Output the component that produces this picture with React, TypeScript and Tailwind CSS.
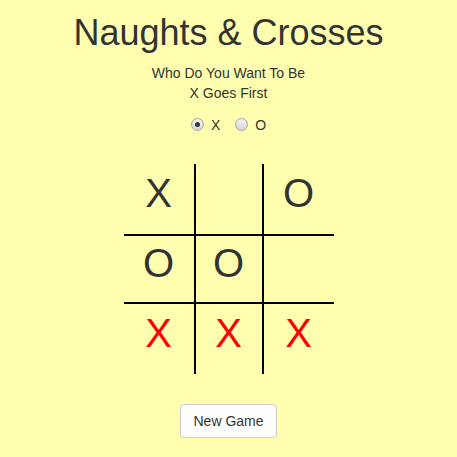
import { useState } from "react";

type Mark = "X" | "O" | "";

const initialBoard: Mark[] = ["X", "", "O", "O", "O", "", "X", "X", "X"];
const winLine = [6, 7, 8];

// borders per cell so the grid only has the inner lines
const cellBorders = [
	"",
	"border-x-2",
	"",
	"border-y-2",
	"border-2",
	"border-y-2",
	"",
	"border-x-2",
	"",
];

const Radio = ({ checked }: { checked: boolean }) => (
	<span className="relative flex h-[13px] w-[13px] items-center justify-center rounded-full border border-[#a3a3a3] bg-gradient-to-b from-[#f4f4f4] to-[#d6d6d6]">
		{checked && <span className="h-[5px] w-[5px] rounded-full bg-[#3a3a3a]" />}
	</span>
);

const App = () => {
	const [player, setPlayer] = useState<"X" | "O">("X");
	const [board, setBoard] = useState<Mark[]>(initialBoard);

	return (
		<div
			className="min-h-screen bg-[#ffffb0] pt-[13px] text-center text-[#333333]"
			style={{ fontFamily: '"Liberation Sans", Arial, sans-serif' }}
		>
			<h1 className="mb-[10px] text-[36px] leading-[1.1] font-normal">
				Naughts &amp; Crosses
			</h1>
			<div className="text-sm leading-5">Who Do You Want To Be</div>
			<div className="text-sm leading-5">X Goes First</div>

			<div className="mt-[12px] flex h-5 items-center justify-center gap-[15px] text-sm leading-5">
				{(["X", "O"] as const).map((p) => (
					<label
						key={p}
						className="flex cursor-pointer items-center gap-[7px]"
						onClick={() => setPlayer(p)}
					>
						<Radio checked={player === p} />
						<span>{p}</span>
					</label>
				))}
			</div>

			<div className="mx-auto mt-[29px] grid w-[210px] grid-cols-3">
				{board.map((mark, i) => (
					<div
						key={i}
						onClick={() => {
							if (mark) return;
							const next = [...board];
							next[i] = player;
							setBoard(next);
						}}
						className={`flex h-[70px] items-center justify-center border-black pb-[11px] text-[40px] leading-none ${cellBorders[i]} ${
							winLine.includes(i) ? "text-[#ff0000]" : "text-[#333333]"
						}`}
					>
						{mark}
					</div>
				))}
			</div>

			<button
				className="mt-[30px] rounded-[4px] border border-[#cccccc] bg-white px-3 py-1.5 text-sm leading-5 text-[#333333]"
				onClick={() => setBoard(Array(9).fill(""))}
			>
				New Game
			</button>
		</div>
	);
};

export default App;
